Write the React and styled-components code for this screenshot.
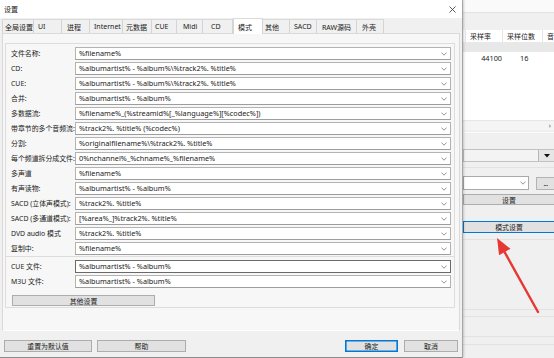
import React from 'react';
import styled, { createGlobalStyle } from 'styled-components';

const Global = createGlobalStyle`
  html, body { margin: 0; padding: 0; }
  body {
    width: 554px; height: 358px; overflow: hidden; background: #f0f0f0;
    font-family: "Noto Sans", "Noto Sans CJK SC", sans-serif;
    font-size: 7.2px; color: #1b1b1b;
  }
  #root { width: 554px; height: 358px; }
`;

const Screen = styled.div`
  position: relative;
  display: flex;
  width: 554px;
  height: 358px;
  overflow: hidden;
`;

/* ---------- dialog ---------- */
const Dialog = styled.div`
  position: relative;
  z-index: 1;
  flex: none;
  width: 463px;
  height: 358px;
  box-sizing: border-box;
  display: flex;
  flex-direction: column;
  background: #f0f0f0;
  border-right: 1px solid #a6a6a6;
  border-bottom: 1px solid #8c8c8c;
  box-shadow: 1px 0 2px rgba(0, 0, 0, 0.18);
`;

const TitleBar = styled.div`
  flex: none;
  height: 18px;
  background: #fff;
  display: flex;
  align-items: center;
  justify-content: space-between;
  padding: 0 6px 0 4px;
`;

const TitleText = styled.span`
  font-size: 7px;
  color: #222;
`;

const TabStrip = styled.div`
  position: relative;
  z-index: 2;
  flex: none;
  height: 15px;
  display: flex;
  align-items: flex-end;
  padding-left: 2px;
`;

const Tab = styled.div`
  box-sizing: border-box;
  flex: none;
  width: ${p => p.$w}px;
  height: ${p => (p.$active ? 16 : 14)}px;
  margin-bottom: ${p => (p.$active ? -1 : 0)}px;
  padding-left: ${p => p.$pl}px;
  display: flex;
  align-items: center;
  font-size: 7px;
  white-space: nowrap;
  background: ${p => (p.$active ? '#fff' : '#f0f0f0')};
  border-top: 1px solid #dadada;
  border-right: 1px solid #d4d4d4;
  border-left: ${p => (p.$first || p.$active ? '1px solid #d4d4d4' : 'none')};
`;

const TabPanel = styled.div`
  flex: none;
  height: 298px;
  box-sizing: border-box;
  margin: 0 2px;
  border: 1px solid #d9d9d9;
  border-bottom-color: #fdfdfd;
  background: #f7f7f7;
  padding: 9px 4px 0 2px;
  display: flex;
  flex-direction: column;
`;

const Group = styled.div`
  display: flex;
  flex-direction: column;
  gap: 2px;
  border: 1px solid #dddddd;
  border-top: ${p => (p.$joined ? 'none' : '1px solid #dddddd')};
  padding: 3px 3px 1px 0;
`;

const Row = styled.div`
  display: grid;
  grid-template-columns: 69px 1fr;
  height: 13px;
  align-items: center;
`;

const Label = styled.span`
  position: relative;
  z-index: 1;
  padding-left: 5px;
  white-space: nowrap;
  font-size: 6.9px;
  line-height: 13px;
  color: #222;
`;

const Combo = styled.div`
  box-sizing: border-box;
  height: 13px;
  display: flex;
  align-items: center;
  justify-content: space-between;
  padding: 0 3px 0 3px;
  background: #fff;
  border: 1px solid ${p => (p.$focused ? '#6a6a6a' : '#b3b3b3')};
  border-bottom-color: ${p => (p.$focused ? '#6a6a6a' : '#9d9d9d')};
  font-size: 7.3px;
  white-space: nowrap;
  overflow: hidden;
  color: #1b1b1b;
`;

const ComboText = styled.span`
  line-height: 11px;
`;

const WideButton = styled.div`
  box-sizing: border-box;
  width: 143px;
  height: 11px;
  margin: 5px 0 0 6px;
  display: flex;
  align-items: center;
  justify-content: center;
  background: #e1e1e1;
  border: 1px solid #adadad;
  font-size: 6.9px;
`;

const Footer = styled.div`
  flex: 1;
  display: flex;
  justify-content: space-between;
  padding: 9px 4px 0 4px;
`;

const ButtonGroup = styled.div`
  display: flex;
  gap: ${p => p.$gap}px;
`;

const Button = styled.div`
  box-sizing: border-box;
  width: ${p => p.$w}px;
  height: 12px;
  display: flex;
  align-items: center;
  justify-content: center;
  background: #e1e1e1;
  border: 1px solid ${p => (p.$primary ? '#0078d7' : '#adadad')};
  box-shadow: ${p => (p.$primary ? 'inset 0 0 0 0.6px #0078d7' : 'none')};
  font-size: 6.9px;
  color: #1b1b1b;
`;

/* ---------- background application ---------- */
const BackApp = styled.div`
  flex: none;
  width: 91px;
  display: flex;
  flex-direction: column;
  background: #f0f0f0;
`;

const TopBand = styled.div`
  flex: none;
  height: 12px;
  background: #fafafa;
  border-bottom: 1px solid #e2e2e2;
`;

const Spacer = styled.div`
  flex: none;
  height: ${p => p.$h}px;
`;

const Divider = styled.div`
  flex: none;
  height: 1px;
  margin-top: ${p => p.$mt}px;
  background: ${p => p.$c || '#e2e2e2'};
`;

const ListView = styled.div`
  flex: none;
  height: 100px;
  display: flex;
  flex-direction: column;
  background: #fff;
`;

const ListRow = styled.div`
  flex: none;
  display: flex;
  height: ${p => p.$h}px;
  background: ${p => p.$bg || '#fff'};
`;

const HeadCell = styled.div`
  flex: none;
  box-sizing: border-box;
  width: ${p => p.$w}px;
  display: flex;
  align-items: center;
  padding-left: ${p => (p.$w > 4 ? 4 : 0)}px;
  border-right: 1px solid #e5e5e5;
  font-size: 7px;
  white-space: nowrap;
  color: #222;
`;

const Cell = styled.div`
  flex: none;
  box-sizing: border-box;
  width: ${p => p.$w}px;
  display: flex;
  align-items: center;
  justify-content: ${p => p.$align || 'flex-start'};
  padding: 0 ${p => p.$pr || 0}px 0 ${p => p.$pl || 0}px;
  font-size: 7.3px;
  white-space: nowrap;
`;

const ListFill = styled.div`
  flex: 1;
`;

const HScroll = styled.div`
  flex: none;
  height: 10px;
  display: flex;
  align-items: center;
  justify-content: flex-end;
  padding-right: 3px;
  box-sizing: border-box;
  background: #f4f4f4;
  border-top: 1px solid #e6e6e6;
  font-size: 7px;
  color: #555;
`;

const SideCombo = styled.div`
  flex: none;
  box-sizing: border-box;
  margin-top: ${p => p.$mt}px;
  height: 13px;
  display: flex;
  align-items: stretch;
  justify-content: space-between;
  background: #f3f3f3;
  border: 1px solid #c2c2c2;
  border-right: none;
`;

const DropButton = styled.div`
  width: 15px;
  display: flex;
  align-items: center;
  justify-content: center;
  background: #e6e6e6;
  border-left: 1px solid #b5b5b5;
`;

const PickRow = styled.div`
  flex: none;
  display: flex;
  gap: 7px;
  margin-top: ${p => p.$mt}px;
  height: 14px;
`;

const PickCombo = styled.div`
  box-sizing: border-box;
  width: 66px;
  display: flex;
  align-items: center;
  justify-content: flex-end;
  padding-right: 2px;
  background: #fff;
  border: 1px solid #a9a9a9;
`;

const DotsButton = styled.div`
  flex: 1;
  margin-top: 1px;
  box-sizing: border-box;
  display: flex;
  align-items: center;
  justify-content: center;
  background: #e1e1e1;
  border: 1px solid #b3b3b3;
  border-right: none;
  font-size: 7px;
  letter-spacing: -0.5px;
`;

const SideButton = styled.div`
  flex: none;
  box-sizing: border-box;
  margin-top: ${p => p.$mt}px;
  height: ${p => p.$h}px;
  width: 92px;
  display: flex;
  align-items: center;
  justify-content: center;
  background: #e1e1e1;
  border: 1px solid ${p => (p.$primary ? '#0078d7' : '#adadad')};
  font-size: 6.9px;
`;

const ArrowLayer = styled.svg`
  position: absolute;
  left: 0;
  top: 0;
  z-index: 3;
  pointer-events: none;
`;

/* ---------- icons ---------- */
const Chevron = () => (
  <svg width="6" height="4" viewBox="0 0 6 4">
    <polyline points="0.5,0.6 3,3.2 5.5,0.6" fill="none" stroke="#7a7a7a" strokeWidth="0.8" />
  </svg>
);

const CloseIcon = () => (
  <svg width="7" height="7" viewBox="0 0 7 7">
    <path d="M0.5 0.5 L6.5 6.5 M6.5 0.5 L0.5 6.5" stroke="#333" strokeWidth="0.8" />
  </svg>
);

const DownTri = () => (
  <svg width="6" height="4" viewBox="0 0 6 4">
    <polygon points="0,0 6,0 3,3.5" fill="#111" />
  </svg>
);

/* ---------- data ---------- */
const tabs = [
  ['全局设置', 32, 2],
  ['UI', 28, 4],
  ['进程', 28, 5],
  ['Internet', 33, 4],
  ['元数据', 29, 3],
  ['CUE', 25, 3],
  ['Midi', 26, 6],
  ['CD', 30, 8],
  ['模式', 30, 4, true],
  ['其他', 27, 2],
  ['SACD', 27, 4],
  ['RAW源码', 40, 5],
  ['外壳', 27, 5],
];

const mainRows = [
  ['文件名称:', '%filename%'],
  ['CD:', '%albumartist% - %album%\\%track2%. %title%'],
  ['CUE:', '%albumartist% - %album%\\%track2%. %title%'],
  ['合并:', '%albumartist% - %album%'],
  ['多数据流:', '%filename%_(%streamid%[_%language%][%codec%])'],
  ['带章节的多个音频流:', '%track2%. %title% (%codec%)'],
  ['分割:', '%originalfilename%\\%track2%. %title%'],
  ['每个频道拆分成文件:', '0%nchannel%_%chname%_%filename%'],
  ['多声道', '%filename%'],
  ['有声读物:', '%albumartist% - %album%'],
  ['SACD (立体声模式):', '%track2%. %title%'],
  ['SACD (多通道模式):', '[%area%_]%track2%. %title%'],
  ['DVD audio 模式', '%track2%. %title%'],
  ['复制中:', '%filename%'],
];

const listRows = [
  ['CUE 文件:', '%albumartist% - %album%', true],
  ['M3U 文件:', '%albumartist% - %album%', false],
];

const FieldRow = ({ label, value, focused }) => (
  <Row>
    <Label>{label}</Label>
    <Combo $focused={focused}>
      <ComboText>{value}</ComboText>
      <Chevron />
    </Combo>
  </Row>
);

export default function App() {
  return (
    <>
      <Global />
      <Screen>
        <Dialog>
          <TitleBar>
            <TitleText>设置</TitleText>
            <CloseIcon />
          </TitleBar>
          <TabStrip>
            {tabs.map(([t, w, pl, active], i) => (
              <Tab key={t} $w={w} $pl={pl} $active={active} $first={i === 0}>
                {t}
              </Tab>
            ))}
          </TabStrip>
          <TabPanel>
            <Group>
              {mainRows.map(([l, v]) => (
                <FieldRow key={l} label={l} value={v} />
              ))}
            </Group>
            <Group $joined>
              {listRows.map(([l, v, f]) => (
                <FieldRow key={l} label={l} value={v} focused={f} />
              ))}
              <WideButton>其他设置</WideButton>
            </Group>
          </TabPanel>
          <Footer>
            <ButtonGroup $gap={5}>
              <Button $w={88}>重置为默认值</Button>
              <Button $w={89}>帮助</Button>
            </ButtonGroup>
            <ButtonGroup $gap={6}>
              <Button $w={53} $primary>确定</Button>
              <Button $w={54}>取消</Button>
            </ButtonGroup>
          </Footer>
        </Dialog>

        <BackApp>
          <TopBand />
          <Spacer $h={17} />
          <ListView>
            <ListRow $h={12}>
              <HeadCell $w={3} />
              <HeadCell $w={37}>采样率</HeadCell>
              <HeadCell $w={40}>采样位数</HeadCell>
              <HeadCell $w={30}>音</HeadCell>
            </ListRow>
            <ListRow $h={10} $bg="#e8e8e8" />
            <ListRow $h={12}>
              <Cell $w={3} />
              <Cell $w={37} $align="flex-end" $pr={1}>44100</Cell>
              <Cell $w={40} $pl={17}>16</Cell>
            </ListRow>
            <ListFill />
            <HScroll>›</HScroll>
          </ListView>
          <Divider $mt={2} $c="#fafafa" />
          <SideCombo $mt={16}>
            <span />
            <DropButton>
              <DownTri />
            </DropButton>
          </SideCombo>
          <Divider $mt={5} />
          <PickRow $mt={8}>
            <PickCombo>
              <Chevron />
            </PickCombo>
            <DotsButton>...</DotsButton>
          </PickRow>
          <SideButton $mt={4} $h={11}>设置</SideButton>
          <SideButton $mt={16} $h={12} $primary>模式设置</SideButton>
          <Divider $mt={6} />
          <Divider $mt={69} />
          <Divider $mt={6} />
          <Divider $mt={19} />
          <Divider $mt={7} />
        </BackApp>

        <ArrowLayer width="554" height="358" viewBox="0 0 554 358">
          <line x1="538" y1="312" x2="504" y2="251" stroke="#e53935" strokeWidth="2.4" strokeLinecap="round" />
          <polygon points="497,238 510.5,248.8 499.1,255.2" fill="#e53935" />
        </ArrowLayer>
      </Screen>
    </>
  );
}
